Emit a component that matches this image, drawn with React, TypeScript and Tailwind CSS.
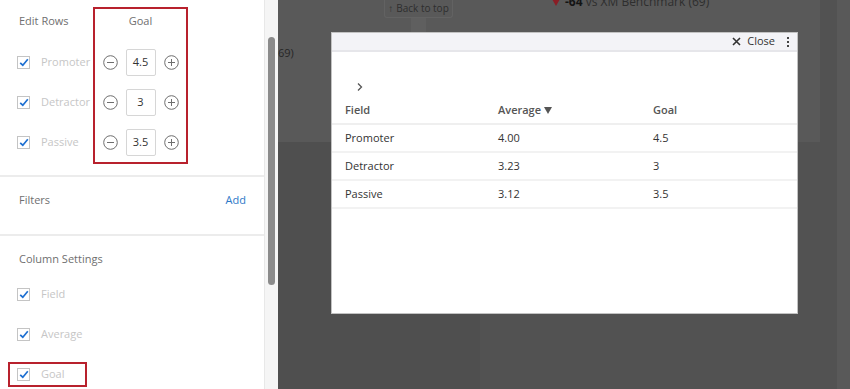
import React from "react";

const font = "font-['Open_Sans','Liberation_Sans',sans-serif]";

const CheckBox = () => (
  <span className="w-[13px] h-[13px] border border-[#c4c4c4] bg-white flex items-center justify-center shrink-0">
    <svg width="10" height="9" viewBox="0 0 10 9">
      <path d="M1.2 4.8 L3.8 7.2 L8.8 1.3" fill="none" stroke="#1d6fd1" strokeWidth="1.7" />
    </svg>
  </span>
);

const CircleIcon = ({ plus }: { plus?: boolean }) => (
  <svg width="15" height="15" viewBox="0 0 15 15" className="shrink-0">
    <circle cx="7.5" cy="7.5" r="6.8" fill="none" stroke="#6e6e6e" strokeWidth="1" />
    <path d="M4 7.5 H11" stroke="#6e6e6e" strokeWidth="1" />
    {plus && <path d="M7.5 4 V11" stroke="#6e6e6e" strokeWidth="1" />}
  </svg>
);

const rows = [
  { name: "Promoter", avg: "4.00", goal: "4.5" },
  { name: "Detractor", avg: "3.23", goal: "3" },
  { name: "Passive", avg: "3.12", goal: "3.5" },
];

const CheckRow = ({ label, boxed }: { label: string; boxed?: boolean }) => (
  <div className="h-[40px] flex items-center">
    <div
      className={
        boxed
          ? "flex items-center gap-[11px] border-2 border-[#b8212d] h-[25px] w-[79px] -ml-[9px] pl-[7px]"
          : "flex items-center gap-[11px]"
      }
    >
      <CheckBox />
      <span className="text-[11px] text-[#c6c6c6]">{label}</span>
    </div>
  </div>
);

const SidePanel = () => (
  <div className="w-[264px] h-full bg-white flex flex-col shrink-0 overflow-hidden">
    {/* edit rows */}
    <div className="h-[177px] shrink-0 flex pl-[17px] pt-[7px] border-b-2 border-[#ececec]">
      <div className="w-[76px] pt-[2px]">
        <div className="h-[24px] flex items-center pl-[2px] text-[11px] text-[#6f6f6f]">Edit Rows</div>
        <div className="mt-[9px]">
          {rows.map((r) => (
            <div key={r.name} className="h-[40px] flex items-center gap-[11px]">
              <CheckBox />
              <span className="text-[11px] text-[#c6c6c6]">{r.name}</span>
            </div>
          ))}
        </div>
      </div>
      <div className="w-[95px] h-[157px] border-2 border-[#b8212d] flex flex-col">
        <div className="h-[24px] flex items-center justify-center text-[11px] text-[#6f6f6f]">Goal</div>
        <div className="mt-[9px]">
          {rows.map((r) => (
            <div key={r.name} className="h-[40px] flex items-center justify-center gap-[8px]">
              <CircleIcon />
              <div className="w-[30px] h-[27px] border border-[#d6d6d6] rounded-[2px] flex items-center justify-center text-[11px] text-[#333]">
                {r.goal}
              </div>
              <CircleIcon plus />
            </div>
          ))}
        </div>
      </div>
    </div>

    {/* filters */}
    <div className="h-[59px] shrink-0 flex items-center justify-between pl-[19px] pr-[18px] pb-[10px] border-b-2 border-[#ececec]">
      <span className="text-[11px] text-[#6f6f6f]">Filters</span>
      <span className="text-[11px] text-[#2e78c8]">Add</span>
    </div>

    {/* column settings */}
    <div className="shrink-0 pl-[17px] pt-[11px]">
      <div className="h-[24px] flex items-center pl-[2px] text-[11px] text-[#6f6f6f]">Column Settings</div>
      <div className="mt-[3px]">
        <CheckRow label="Field" />
        <CheckRow label="Average" />
        <CheckRow label="Goal" boxed />
      </div>
    </div>
  </div>
);

const ScrollTrack = () => (
  <div className="w-[14px] h-full bg-[#f5f5f5] border-l border-[#e8e8e8] shrink-0 pt-[37px] pl-[3px]">
    <div className="w-[7px] h-[248px] rounded-full bg-[#8b8b8b]" />
  </div>
);

const Modal = () => (
  <div className="absolute left-[53px] top-[32px] w-[467px] h-[282px] bg-white border border-[#c2c2c2] flex flex-col">
    <div className="h-[19px] bg-[#f3f3f7] border-b-2 border-[#e6e6ea] flex items-center justify-end pr-[8px] shrink-0">
      <svg width="9" height="9" viewBox="0 0 9 9" className="mr-[6px]">
        <path d="M1 1 L8 8 M8 1 L1 8" stroke="#333" strokeWidth="1.6" />
      </svg>
      <span className="text-[11px] text-[#333]">Close</span>
      <div className="ml-[12px] flex flex-col gap-[2px]">
        <span className="w-[2px] h-[2px] bg-[#444]" />
        <span className="w-[2px] h-[2px] bg-[#444]" />
        <span className="w-[2px] h-[2px] bg-[#444]" />
      </div>
    </div>
    <div className="h-[45px] flex items-end pl-[24px] pb-[5px] shrink-0">
      <svg width="8" height="10" viewBox="0 0 8 10">
        <path d="M2 1.5 L5.5 5 L2 8.5" fill="none" stroke="#555" strokeWidth="1.3" />
      </svg>
    </div>
    <div className="grid grid-cols-[166px_155px_1fr] text-[11px]">
      <div className="h-[28px] pl-[13px] flex items-center font-semibold text-[#555] border-b-2 border-[#efefef]">Field</div>
      <div className="h-[28px] flex items-center gap-[3px] font-semibold text-[#555] border-b-2 border-[#efefef]">
        Average
        <svg width="8" height="7" viewBox="0 0 8 7">
          <path d="M0 0 H8 L4 7 Z" fill="#555" />
        </svg>
      </div>
      <div className="h-[28px] flex items-center font-semibold text-[#555] border-b-2 border-[#efefef]">Goal</div>
      {rows.map((r) => (
        <React.Fragment key={r.name}>
          <div className="h-[28px] pl-[13px] flex items-center text-[#333] border-b-2 border-[#f2f2f2]">{r.name}</div>
          <div className="h-[28px] flex items-center text-[#333] border-b-2 border-[#f2f2f2]">{r.avg}</div>
          <div className="h-[28px] flex items-center text-[#333] border-b-2 border-[#f2f2f2]">{r.goal}</div>
        </React.Fragment>
      ))}
    </div>
  </div>
);

const Backdrop = () => (
  <div className="flex-1 h-full relative bg-[#525252] flex flex-col overflow-hidden">
    <div className="flex h-[142px] shrink-0">
      <div className="w-[542px] h-full bg-[#595959] relative flex">
        <div className="w-[106px] pt-[45px] text-[11px] text-[#262626]">69)</div>
        <div className="flex flex-col items-center w-[69px]">
          <div className="w-[69px] h-[18px] border border-[#626262] border-t-0 rounded-b-[3px] flex items-center justify-center gap-[3px] text-[10px] text-[#2e2e2e]">
            <span>↑</span>
            <span>Back to top</span>
          </div>
          <div className="w-[15px] h-[14px] bg-[#5f5f5f]" />
        </div>
        <div className="ml-[99px] -mt-[6px] flex items-center gap-[5px] text-[12px] text-[#2e2e2e] h-[16px]">
          <svg width="8" height="7" viewBox="0 0 8 7">
            <path d="M0 0 H8 L4 7 Z" fill="#8a1d25" />
          </svg>
          <span>
            <span className="font-bold text-[#141414]">-64</span> vs XM Benchmark (69)
          </span>
        </div>
      </div>
      <div className="w-[17px] h-full" />
      <div className="flex-1 h-full bg-[#595959]" />
    </div>
    <div className="flex flex-1">
      <div className="w-[202px] h-full bg-[#4f4f4f]" />
      <div className="flex-1" />
      <div className="w-[13px] h-full bg-[#595959]" />
    </div>
    <Modal />
  </div>
);

export default function App() {
  return (
    <div className={`w-[850px] h-[389px] flex overflow-hidden ${font}`}>
      <SidePanel />
      <ScrollTrack />
      <Backdrop />
    </div>
  );
}
